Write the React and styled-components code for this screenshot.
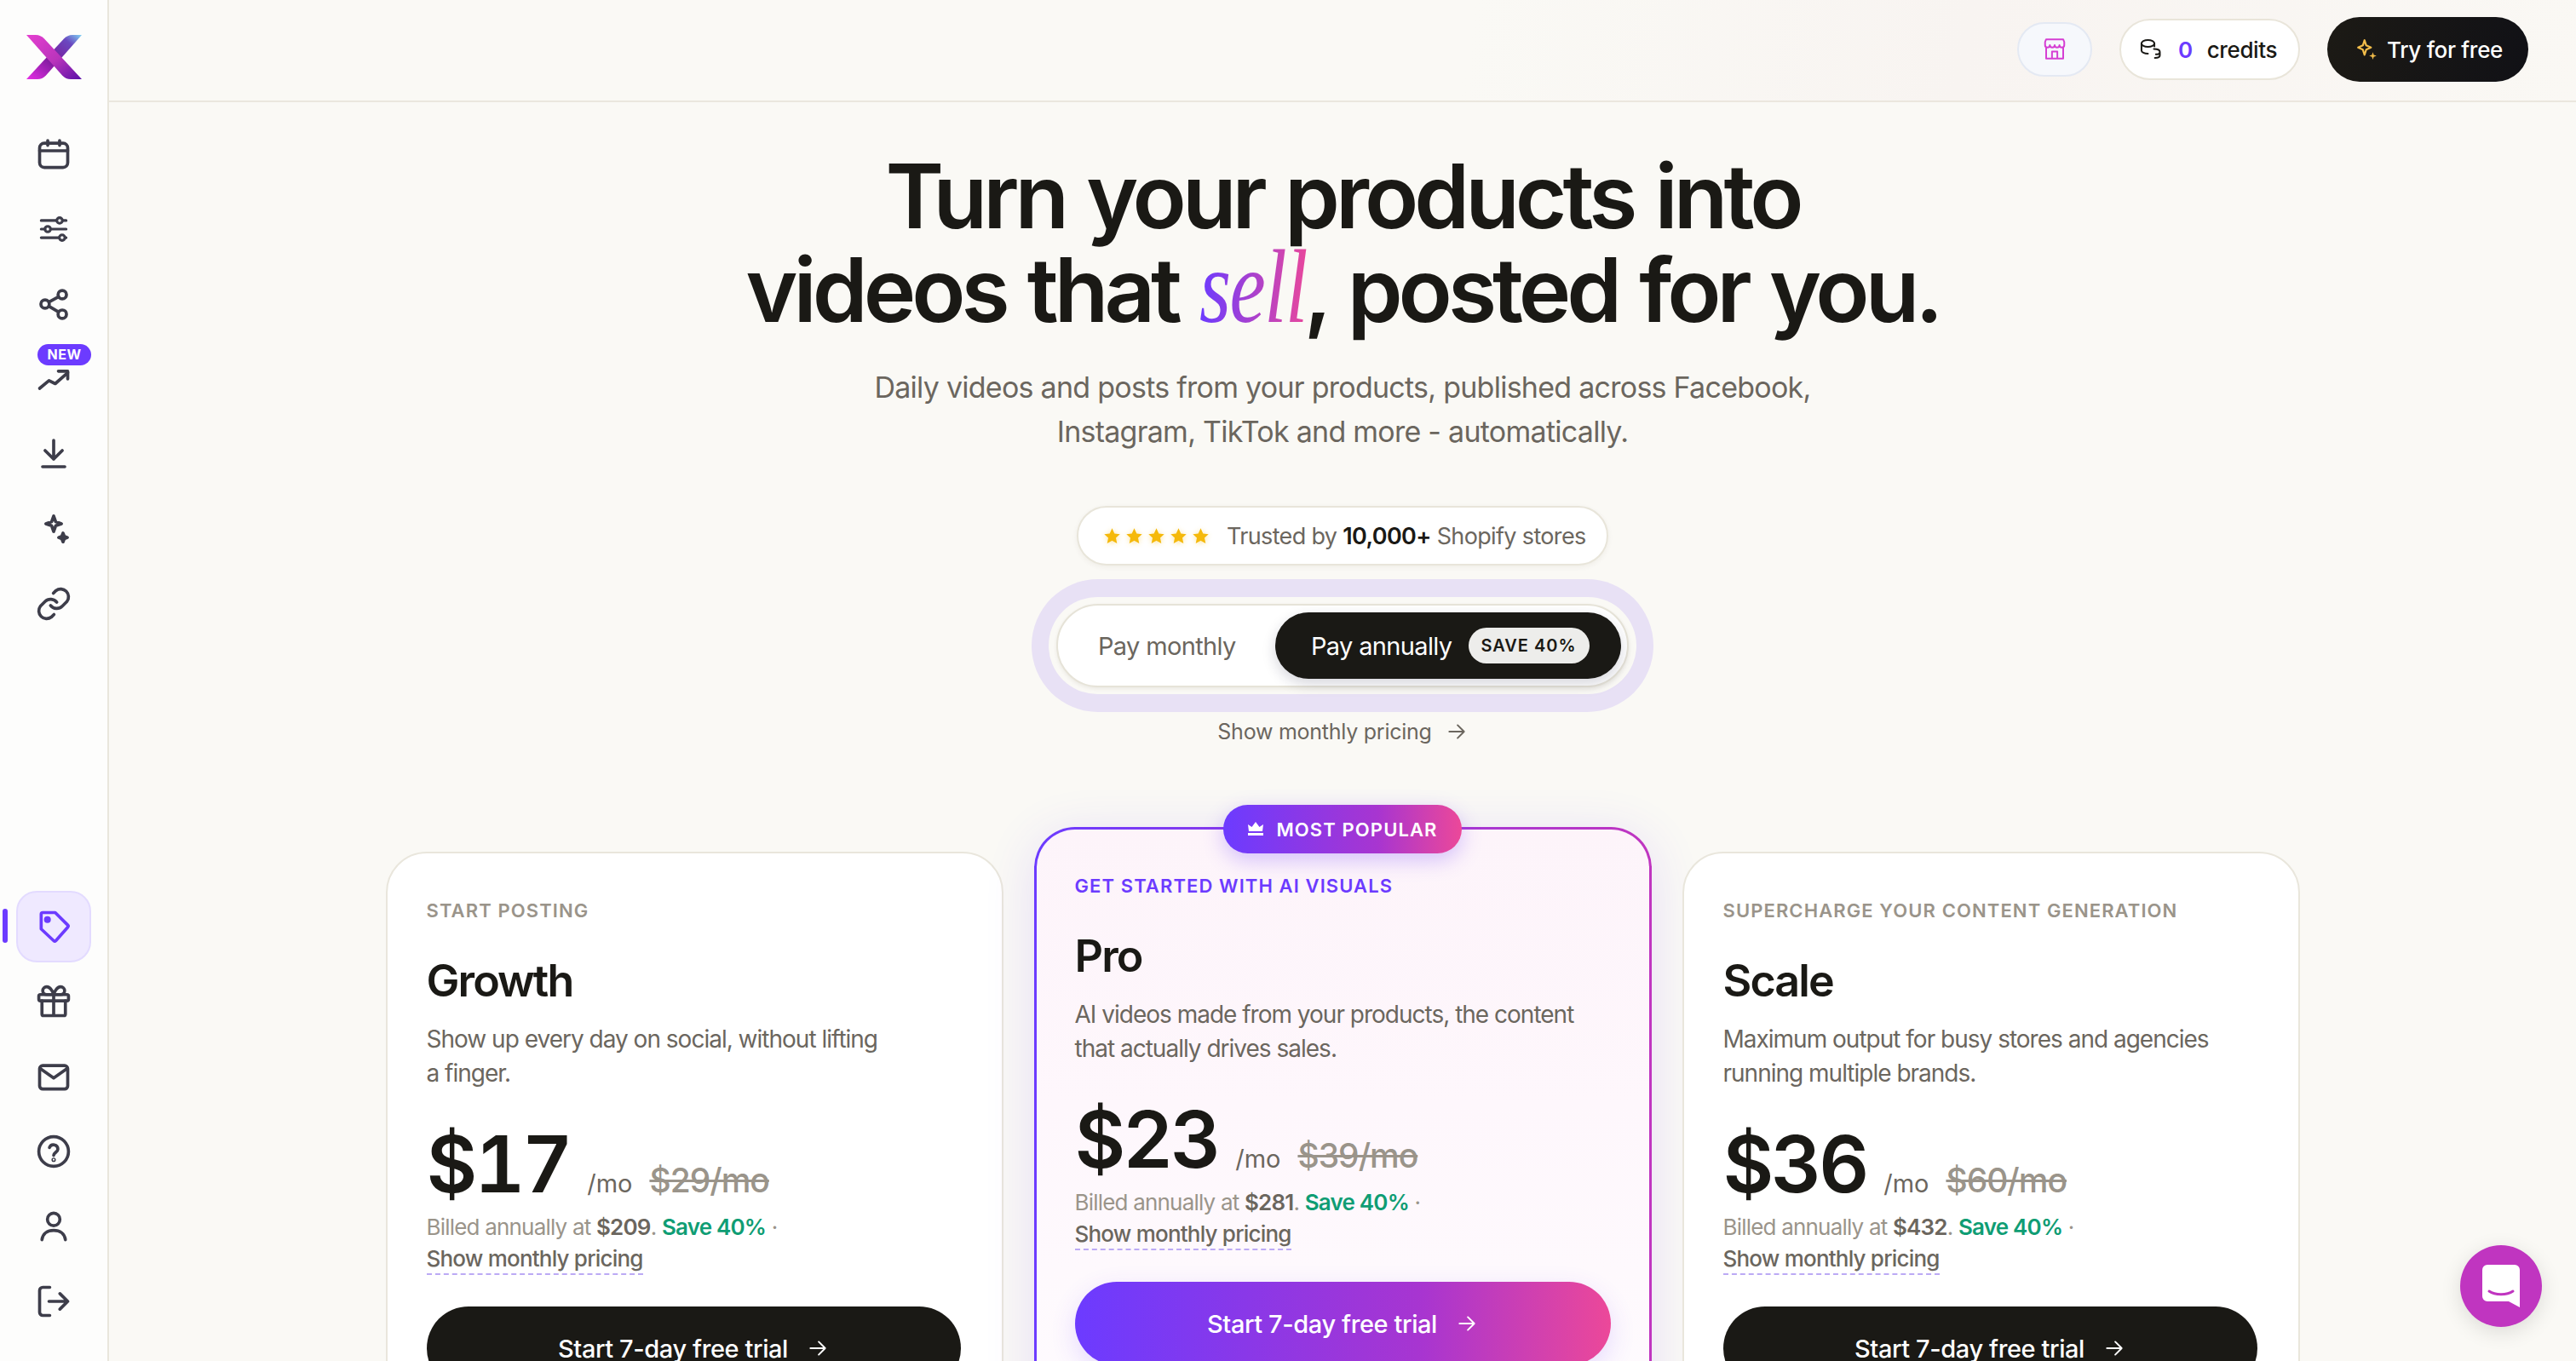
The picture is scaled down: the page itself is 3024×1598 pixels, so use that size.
import React from "react";
import styled, { createGlobalStyle } from "styled-components";

const SANS = `"Inter", "Liberation Sans", sans-serif`;

const GlobalStyle = createGlobalStyle`
  html, body {
    margin: 0;
    height: 100%;
    overflow: hidden;
    background: #faf9f5;
  }
  * { box-sizing: border-box; }
  #root { height: 100%; }
`;

const Shell = styled.div`
  display: flex;
  height: 1598px;
  font-family: ${SANS};
  color: #1a1915;
  overflow: hidden;
`;

const Sidebar = styled.aside`
  flex: 0 0 128px;
  display: flex;
  flex-direction: column;
  align-items: center;
  justify-content: space-between;
  background: #fdfdfc;
  border-right: 2px solid #e9e6dc;
  padding-bottom: 26px;
`;

const SideGroup = styled.div`
  display: flex;
  flex-direction: column;
  align-items: center;
`;

const LogoSlot = styled.div`
  height: 137px;
  padding-top: 41px;
`;

const SideItem = styled.div`
  position: relative;
  width: 88px;
  height: 88px;
  display: flex;
  align-items: center;
  justify-content: center;
  color: #3d3d4a;
  border-radius: 24px;
  ${(p) =>
    p.$active &&
    `
    height: 84px;
    margin: 2px 0;
    color: #6c3bff;
    background: #efe9ff;
    border: 2px solid #e3dbff;
  `}
`;

const ActiveBar = styled.span`
  position: absolute;
  left: -18px;
  top: 19px;
  width: 6px;
  height: 40px;
  border-radius: 3px;
  background: #6c3bff;
`;

const NewTag = styled.span`
  position: absolute;
  top: 3px;
  right: 0;
  width: 63px;
  height: 25px;
  border-radius: 13px;
  background: #6c3bff;
  color: #fff;
  font-size: 16px;
  font-weight: 700;
  letter-spacing: 0.5px;
  line-height: 25px;
  text-align: center;
`;

const Main = styled.main`
  flex: 1;
  min-width: 0;
  display: flex;
  flex-direction: column;
  align-items: center;
  & > * {
    flex-shrink: 0;
  }
`;

const TopBar = styled.header`
  align-self: stretch;
  height: 120px;
  display: flex;
  align-items: center;
  justify-content: flex-end;
  gap: 32px;
  padding: 0 56px 2px 0;
  border-bottom: 2px solid #ebe7de;
  background: linear-gradient(100deg, #faf9f5 55%, #f8f4f1 75%, #faf8f4 100%);
`;

const StoreButton = styled.div`
  width: 88px;
  height: 64px;
  border-radius: 32px;
  background: #f6f8fc;
  border: 2px solid #e4e9f3;
  display: flex;
  align-items: center;
  justify-content: center;
  color: #d53fd3;
`;

const CreditsButton = styled.div`
  width: 212px;
  height: 72px;
  border-radius: 36px;
  background: #fff;
  border: 2px solid #e9e5da;
  display: flex;
  align-items: center;
  padding-left: 21px;
  font-size: 26px;
  font-weight: 500;
  letter-spacing: -0.4px;
`;

const CreditCount = styled.span`
  color: #6c3bff;
  font-weight: 600;
  margin: 0 17px 0 18px;
`;

const TryButton = styled.div`
  width: 236px;
  height: 76px;
  border-radius: 38px;
  background: linear-gradient(100deg, #1c1a15, #111116);
  color: #fff;
  display: flex;
  align-items: center;
  padding-left: 34px;
  gap: 10px;
  font-size: 26px;
  font-weight: 500;
  letter-spacing: -0.3px;
`;

const Heading = styled.h1`
  margin: 55px 0 0;
  font-size: 104px;
  line-height: 110px;
  font-weight: 600;
  letter-spacing: -5px;
  word-spacing: 4px;
  text-align: center;
  color: #1a1915;
`;

const Accent = styled.em`
  display: inline-block;
  margin-right: -45px;
  font-family: "Liberation Serif", serif;
  font-weight: 400;
  font-style: italic;
  font-size: 122px;
  line-height: 100px;
  letter-spacing: -2px;
  transform: scaleX(0.78);
  transform-origin: left center;
  background: linear-gradient(90deg, #6c3bff, #ec4899);
  -webkit-background-clip: text;
  background-clip: text;
  color: transparent;
  padding-right: 6px;
`;

const Lede = styled.p`
  margin: 34px 0 0;
  font-size: 34px;
  line-height: 52px;
  letter-spacing: -0.74px;
  text-align: center;
  color: #6b665e;
`;

const TrustPill = styled.div`
  margin-top: 61px;
  width: 624px;
  height: 70px;
  border-radius: 35px;
  background: #fff;
  border: 2px solid #e8e5da;
  box-shadow: 0 2px 6px rgba(60, 50, 20, 0.06);
  display: flex;
  align-items: center;
  padding-left: 29px;
  gap: 20px;
  font-size: 27px;
  letter-spacing: -0.65px;
  color: #6b665e;
`;

const Stars = styled.span`
  display: flex;
  gap: 5px;
  color: #f5b90b;
  filter: drop-shadow(0 1px 3px rgba(245, 185, 11, 0.4));
`;

const Strong = styled.strong`
  color: #1a1915;
  font-weight: 600;
`;

const ToggleRing = styled.div`
  margin-top: 16px;
  padding: 21px 20px;
  border-radius: 80px;
  background: #e8e1f5;
`;

const ToggleInner = styled.div`
  padding: 8px 9px;
  border-radius: 60px;
  background: #faf9f5;
`;

const TogglePill = styled.div`
  width: 672px;
  height: 98px;
  border-radius: 49px;
  background: #fff;
  border: 2px solid #e6e3d8;
  box-shadow: 0 2px 4px rgba(60, 50, 20, 0.08);
  padding: 8px 7px;
  display: flex;
  align-items: center;
  justify-content: space-between;
  font-size: 29px;
  letter-spacing: -0.65px;
`;

const PayOption = styled.div`
  display: flex;
  align-items: center;
  height: 78px;
  border-radius: 39px;
  ${(p) =>
    p.$on
      ? `
    width: 406px;
    padding-left: 42px;
    gap: 19px;
    background: #1a1915;
    color: #fff;
    box-shadow: 0 6px 16px rgba(30, 25, 60, 0.18);
  `
      : `
    padding-left: 40px;
    color: #6b665e;
  `}
`;

const SaveBadge = styled.span`
  width: 142px;
  height: 42px;
  border-radius: 21px;
  background: #ededeb;
  color: #1a1915;
  font-size: 20px;
  font-weight: 600;
  letter-spacing: 1px;
  line-height: 42px;
  text-align: center;
`;

const ShowPricing = styled.div`
  margin-top: 5px;
  height: 36px;
  display: flex;
  align-items: center;
  gap: 16px;
  font-size: 25px;
  letter-spacing: -0.25px;
  color: #6b665e;
`;

const Plans = styled.section`
  margin-top: 123px;
  width: 2247px;
  display: grid;
  grid-template-columns: repeat(3, 725px);
  gap: 36px;
  align-items: start;
`;

const Card = styled.article`
  position: relative;
  height: 720px;
  border-radius: 48px;
  padding: 52px 48px 0 46px;
  background: #fff;
  border: 2px solid #e9e6dc;
  ${(p) =>
    p.$featured &&
    `
    margin-top: -29px;
    border: 3px solid transparent;
    padding: 51px 45px 0;
    background:
      linear-gradient(180deg, #fdf4fa 0%, #fef7fc 45%, #fefbfe 100%) padding-box,
      linear-gradient(90deg, #6c3bff, #c035c0) border-box;
    box-shadow: 0 10px 60px rgba(108, 59, 255, 0.14);
  `}
`;

const PopularTag = styled.div`
  position: absolute;
  top: -29px;
  left: 50%;
  transform: translateX(-50%);
  width: 280px;
  height: 57px;
  border-radius: 29px;
  background: linear-gradient(90deg, #6c3bff, #a835d0 65%, #ec4899);
  box-shadow: 0 8px 24px rgba(108, 59, 255, 0.28);
  color: #fff;
  display: flex;
  align-items: center;
  justify-content: center;
  gap: 14px;
  font-size: 22px;
  font-weight: 600;
  letter-spacing: 1.1px;
`;

const Eyebrow = styled.div`
  font-size: 22px;
  line-height: 30px;
  font-weight: 600;
  letter-spacing: 1.1px;
  color: ${(p) => (p.$featured ? "#6c3bff" : "#9a948a")};
`;

const PlanName = styled.h2`
  margin: 36px 0 0;
  font-size: 52px;
  line-height: 64px;
  font-weight: 600;
  letter-spacing: -1.9px;
`;

const PlanText = styled.p`
  margin: 16px 0 0;
  font-size: 28px;
  line-height: 40px;
  letter-spacing: -1px;
  color: #6b665e;
`;

const PriceRow = styled.div`
  margin-top: 39px;
  height: 96px;
  display: flex;
  align-items: baseline;
`;

const Price = styled.span`
  font-size: 92px;
  line-height: 96px;
  font-weight: 600;
  letter-spacing: -3.4px;
  font-variant-numeric: tabular-nums;
`;

const PerMonth = styled.span`
  margin-left: 20px;
  font-size: 29px;
  color: #6b665e;
`;

const OldPrice = styled.s`
  margin-left: 20px;
  font-size: 39px;
  font-weight: 500;
  letter-spacing: -1px;
  color: #9a948a;
`;

const Billing = styled.div`
  margin-top: 7px;
  font-size: 26px;
  line-height: 38px;
  letter-spacing: -0.8px;
  color: #9a948a;
`;

const BillAmount = styled.b`
  font-weight: 600;
  color: #6b665e;
`;

const Saving = styled.b`
  font-weight: 600;
  color: #0f9d74;
`;

const MonthlyLink = styled.span`
  display: block;
  width: fit-content;
  line-height: 35px;
  font-weight: 500;
  color: #6b665e;
  border-bottom: 2px dashed #bcaaf5;
`;

const StartButton = styled.div`
  margin-top: 37px;
  height: 98px;
  border-radius: 49px;
  display: flex;
  align-items: center;
  justify-content: center;
  gap: 22px;
  color: #fff;
  font-size: 29px;
  font-weight: 500;
  letter-spacing: -0.4px;
  background: ${(p) =>
    p.$featured
      ? "linear-gradient(90deg, #6c3bff, #a835d0 65%, #ec4899)"
      : "#1a1915"};
  ${(p) => p.$featured && "box-shadow: 0 10px 30px rgba(108, 59, 255, 0.16);"}
`;

const ChatBubble = styled.div`
  position: fixed;
  left: 2888px;
  top: 1462px;
  width: 96px;
  height: 96px;
  border-radius: 50%;
  background: #c035c0;
  box-shadow: 0 6px 24px rgba(0, 0, 0, 0.12);
  display: flex;
  align-items: center;
  justify-content: center;
`;

const Icon = ({ size = 44, children, sw = 2 }) => (
  <svg
    width={size}
    height={size}
    viewBox="0 0 24 24"
    fill="none"
    stroke="currentColor"
    strokeWidth={sw}
    strokeLinecap="round"
    strokeLinejoin="round"
  >
    {children}
  </svg>
);

const Logo = () => (
  <svg width="65" height="52" viewBox="0 0 65 52">
    <defs>
      <linearGradient id="lgA" x1="0" y1="0" x2="1" y2="1">
        <stop offset="0" stopColor="#e53fd0" />
        <stop offset="0.55" stopColor="#b934bb" />
        <stop offset="1" stopColor="#5a0fa8" />
      </linearGradient>
      <linearGradient id="lgB" x1="0" y1="1" x2="1" y2="0">
        <stop offset="0" stopColor="#e62ee6" />
        <stop offset="0.45" stopColor="#7a1a9a" />
        <stop offset="0.8" stopColor="#6a48c0" />
        <stop offset="1" stopColor="#7fd4f5" />
      </linearGradient>
    </defs>
    <path d="M65 0H54C50 0 47 1.500 44 4.500L0 52H13C17 52 20 50.500 23 47.500Z" fill="url(#lgB)" />
    <path d="M0 0H11C15 0 18 1.500 21 4.500L65 52H52C48 52 45 50.500 42 47.500Z" fill="url(#lgA)" />
  </svg>
);

const topIcons = [
  <><rect x="3" y="5" width="18" height="15.500" rx="3" /><path d="M3 9.800h18M8.200 3.300v3M15.800 3.300v3" /></>,
  <g strokeWidth="1.700"><path d="M4 6.500h10M18 6.500h2M4 12h2.500M10 12h10M4 17.500h11.500M19.500 17.500h.5" /><circle cx="15.800" cy="6.500" r="1.800" /><circle cx="8.200" cy="12" r="1.800" /><circle cx="17.400" cy="17.500" r="1.800" /></g>,
  <><circle cx="17.500" cy="6" r="2.700" /><circle cx="6.500" cy="12" r="2.700" /><circle cx="17.500" cy="18.500" r="2.700" /><path d="M9 10.700l6.200-3.400M9 13.400l6.200 3.700" /></>,
  <><path d="M3 18l6-5 4 2 8-7" /><path d="M15 7h6v5" /></>,
  <><path d="M12 3.300v12M6.500 9.800l5.500 5.500 5.500-5.500M4.900 20.200h14.200" /></>,
  <><path d="M12 3.700l1.300 3.700 3.700 1.300-3.700 1.300L12 13.700l-1.300-3.700L7 8.700l3.700-1.300z" /><path d="M18 14.700l.8 2 2 .8-2 .8-.8 2-.8-2-2-.8 2-.8z" fill="currentColor" /></>,
  <><path d="M10 13a5 5 0 0 0 7.500.5l3-3a5 5 0 0 0-7-7l-1.700 1.700" /><path d="M14 11a5 5 0 0 0-7.500-.5l-3 3a5 5 0 0 0 7 7l1.700-1.700" /></>,
];

const bottomIcons = [
  <><path d="M12 21l-8-7.500V4a1 1 0 0 1 1-1h8l8 8a1 1 0 0 1 0 1.400l-7.600 8.600a1 1 0 0 1-1.400 0z" /><circle cx="8" cy="7.500" r="1.200" fill="currentColor" /></>,
  <><rect x="2.500" y="7.500" width="19" height="4" rx="1" /><path d="M4.500 11.500V20a1 1 0 0 0 1 1h13a1 1 0 0 0 1-1v-8.500M12 7.500V21" /><path d="M12 7.500H7.500a2.500 2.500 0 0 1 0-5C10.500 2.500 12 7.500 12 7.500zM12 7.500h4.500a2.500 2.500 0 0 0 0-5C13.500 2.500 12 7.500 12 7.500z" /></>,
  <><rect x="3" y="5" width="18" height="15" rx="2" /><path d="M3.500 7l8.500 6 8.500-6" /></>,
  <><circle cx="12" cy="12" r="9.500" /><path d="M9.300 9.500a2.800 2.800 0 0 1 5.400 1c0 1.800-2.700 2.300-2.700 4" /><circle cx="12" cy="17.300" r="0.400" /></>,
  <><circle cx="12" cy="7.500" r="4" /><path d="M4.500 20.500c.5-4 3.500-6 7.500-6s7 2 7.500 6" /></>,
  <><path d="M9.500 3H5a2 2 0 0 0-2 2v14a2 2 0 0 0 2 2h4.500M9 12h12M16 7l5 5-5 5" /></>,
];

const Star = () => (
  <svg width="21" height="21" viewBox="0 0 24 24" fill="currentColor">
    <path d="M12 1.500l3.200 7 7.300.8-5.400 5 1.500 7.500L12 18.100l-6.600 3.700 1.500-7.500-5.400-5 7.300-.8z" />
  </svg>
);

const Sparkle = ({ size = 26 }) => (
  <svg width={size} height={size} viewBox="0 0 24 24" fill="none" stroke="#f3bd4a" strokeWidth="2" strokeLinejoin="round">
    <path d="M9 2l1.800 5.700L16 10l-5.200 2.300L9 18l-1.800-5.700L2 10l5.200-2.300z" />
    <path d="M18 15l1 3 3 1-3 1-1 3-1-3-3-1 3-1z" fill="#f3bd4a" stroke="none" />
  </svg>
);

const Arrow = ({ size = 26 }) => (
  <Icon size={size} sw={1.800}>
    <path d="M4 12h16M13 5l7 7-7 7" />
  </Icon>
);

const plans = [
  {
    eyebrow: "START POSTING",
    name: "Growth",
    text: ["Show up every day on social, without lifting", "a finger."],
    price: "$17",
    old: "$29/mo",
    total: "$209",
  },
  {
    eyebrow: "GET STARTED WITH AI VISUALS",
    name: "Pro",
    text: ["AI videos made from your products, the content", "that actually drives sales."],
    price: "$23",
    old: "$39/mo",
    total: "$281",
    featured: true,
  },
  {
    eyebrow: "SUPERCHARGE YOUR CONTENT GENERATION",
    name: "Scale",
    text: ["Maximum output for busy stores and agencies", "running multiple brands."],
    price: "$36",
    old: "$60/mo",
    total: "$432",
  },
];

const App = () => {
  return (
    <Shell>
      <GlobalStyle />
      <Sidebar>
        <SideGroup>
          <LogoSlot>
            <Logo />
          </LogoSlot>
          {topIcons.map((icon, i) => (
            <SideItem key={i}>
              {i === 3 && <NewTag>NEW</NewTag>}
              <Icon>{icon}</Icon>
            </SideItem>
          ))}
        </SideGroup>
        <SideGroup>
          {bottomIcons.map((icon, i) => (
            <SideItem key={i} $active={i === 0}>
              {i === 0 && <ActiveBar />}
              <Icon>{icon}</Icon>
            </SideItem>
          ))}
        </SideGroup>
      </Sidebar>

      <Main>
        <TopBar>
          <StoreButton>
            <Icon size={30} sw={1.600}>
              <path d="M4 10v10.500h16V10M3 5l1-2.500h16l1 2.500v3a2 2 0 0 1-4.500 0 2 2 0 0 1-4.500 0 2 2 0 0 1-4.500 0A2 2 0 0 1 3 8zM9.500 20.500V14h5v6.500" />
            </Icon>
          </StoreButton>
          <CreditsButton>
            <Icon size={28} sw={1.700}>
              <ellipse cx="9" cy="6" rx="6.500" ry="3.500" />
              <path d="M2.500 6v7c0 1.800 2.800 3.200 6.500 3.200M15.500 6v3M15 11.500c3 0 6 .8 6 3s-2 2.500-4 2.500M21 15v3c0 1.500-2 2.500-5 2.500" />
            </Icon>
            <CreditCount>0</CreditCount>
            credits
          </CreditsButton>
          <TryButton>
            <Sparkle />
            Try for free
          </TryButton>
        </TopBar>

        <Heading>
          Turn your products into
          <br />
          videos that <Accent>sell</Accent>, posted for you.
        </Heading>
        <Lede>
          Daily videos and posts from your products, published across Facebook,
          <br />
          Instagram, TikTok and more - automatically.
        </Lede>

        <TrustPill>
          <Stars>
            <Star />
            <Star />
            <Star />
            <Star />
            <Star />
          </Stars>
          <span>
            Trusted by <Strong>10,000+</Strong> Shopify stores
          </span>
        </TrustPill>

        <ToggleRing>
          <ToggleInner>
            <TogglePill>
              <PayOption>Pay monthly</PayOption>
              <PayOption $on>
                Pay annually
                <SaveBadge>SAVE 40%</SaveBadge>
              </PayOption>
            </TogglePill>
          </ToggleInner>
        </ToggleRing>

        <ShowPricing>
          Show monthly pricing
          <Arrow />
        </ShowPricing>

        <Plans>
          {plans.map((plan) => (
            <Card key={plan.name} $featured={plan.featured}>
              {plan.featured && (
                <PopularTag>
                  <svg width="20" height="18" viewBox="0 0 20 18" fill="#fff">
                    <path d="M2 11L1 3l4.500 3L10 0l4.500 6L19 3l-1 8zM1 13h18v3H1z" />
                  </svg>
                  MOST POPULAR
                </PopularTag>
              )}
              <Eyebrow $featured={plan.featured}>{plan.eyebrow}</Eyebrow>
              <PlanName>{plan.name}</PlanName>
              <PlanText>
                {plan.text[0]}
                <br />
                {plan.text[1]}
              </PlanText>
              <PriceRow>
                <Price>{plan.price}</Price>
                <PerMonth>/mo</PerMonth>
                <OldPrice>{plan.old}</OldPrice>
              </PriceRow>
              <Billing>
                Billed annually at <BillAmount>{plan.total}</BillAmount>.{" "}
                <Saving>Save 40%</Saving> ·
                <MonthlyLink>Show monthly pricing</MonthlyLink>
              </Billing>
              <StartButton $featured={plan.featured}>
                Start 7-day free trial
                <Arrow />
              </StartButton>
            </Card>
          ))}
        </Plans>
      </Main>

      <ChatBubble>
        <svg width="44" height="50" viewBox="0 0 44 50">
          <path d="M6 0h32a6 6 0 0 1 6 6v44l-13-7H6a6 6 0 0 1-6-6V6a6 6 0 0 1 6-6z" fill="#fff" />
          <path d="M8 31c7 5 21 5 28 0" fill="none" stroke="#c035c0" strokeWidth="3" strokeLinecap="round" />
        </svg>
      </ChatBubble>
    </Shell>
  );
};

export default App;
